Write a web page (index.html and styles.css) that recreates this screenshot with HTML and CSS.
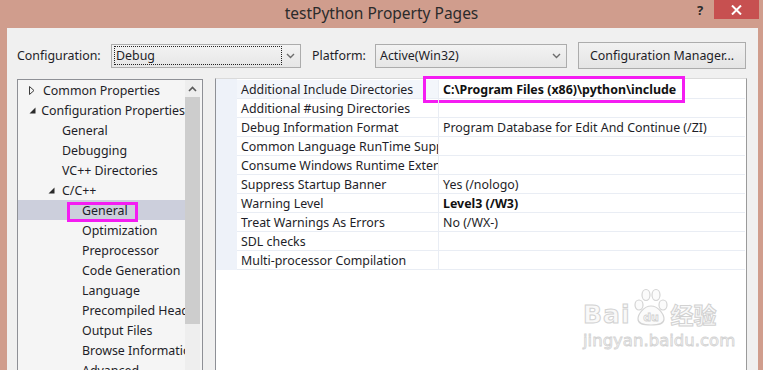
FILE: index.html
```html
<!DOCTYPE html>
<html>
<head>
<meta charset="utf-8">
<title>testPython Property Pages</title>
<link rel="stylesheet" href="styles.css">
</head>
<body>
<div class="window">
  <div class="titlebar">
    <span class="title">testPython Property Pages</span>
    <span class="help">?</span>
    <span class="close"><svg width="11" height="10" viewBox="0 0 11 10"><path d="M1 0.5 L10 9.5 M10 0.5 L1 9.5" stroke="#fff" stroke-width="2"/></svg></span>
  </div>
  <div class="client">
    <div class="toolbar">
      <span class="lbl lbl-config">Configuration:</span>
      <div class="combo combo-config">
        <span class="focus">Debug</span>
        <svg class="chev" width="9" height="6" viewBox="0 0 9 6"><path d="M1 1 L4.5 4.5 L8 1" fill="none" stroke="#6d6d6d" stroke-width="1.4"/></svg>
      </div>
      <span class="lbl lbl-platform">Platform:</span>
      <div class="combo combo-platform">
        <span class="val">Active(Win32)</span>
        <svg class="chev" width="9" height="6" viewBox="0 0 9 6"><path d="M1 1 L4.5 4.5 L8 1" fill="none" stroke="#6d6d6d" stroke-width="1.4"/></svg>
      </div>
      <button class="btn">Configuration Manager...</button>
    </div>
    <div class="panes">
      <div class="tree">
        <ul class="tree-list">
          <li class="l1"><span class="tri"><svg width="6" height="9" viewBox="0 0 6 9"><path d="M0.5 0.5 L5 4.5 L0.5 8.5 Z" fill="none" stroke="#3c3c3c" stroke-width="1"/></svg></span>Common Properties</li>
          <li class="l1"><span class="tri"><svg width="7" height="7" viewBox="0 0 7 7"><path d="M6.5 0.5 L6.5 6.5 L0.5 6.5 Z" fill="#2a2a2a"/></svg></span>Configuration Properties</li>
          <li class="l2">General</li>
          <li class="l2">Debugging</li>
          <li class="l2">VC++ Directories</li>
          <li class="l2b"><span class="tri"><svg width="7" height="7" viewBox="0 0 7 7"><path d="M6.5 0.5 L6.5 6.5 L0.5 6.5 Z" fill="#2a2a2a"/></svg></span>C/C++</li>
          <li class="l3 selected">General<span class="mark mark-tree"></span></li>
          <li class="l3">Optimization</li>
          <li class="l3">Preprocessor</li>
          <li class="l3">Code Generation</li>
          <li class="l3">Language</li>
          <li class="l3">Precompiled Headers</li>
          <li class="l3">Output Files</li>
          <li class="l3">Browse Information</li>
          <li class="l3">Advanced</li>
        </ul>
        <div class="scrollbar">
          <div class="sb-up"><svg width="9" height="6" viewBox="0 0 9 6"><path d="M1 5 L4.5 1.5 L8 5" fill="none" stroke="#5a5a5a" stroke-width="1.6"/></svg></div>
          <div class="sb-thumb"></div>
        </div>
      </div>
      <div class="grid">
        <div class="row current"><span class="gut"></span><span class="name">Additional Include Directories</span><span class="value bold">C:\Program Files (x86)\python\include</span><span class="mark mark-grid"></span></div>
        <div class="row"><span class="gut"></span><span class="name">Additional #using Directories</span><span class="value"></span></div>
        <div class="row"><span class="gut"></span><span class="name">Debug Information Format</span><span class="value">Program Database for Edit And Continue (/ZI)</span></div>
        <div class="row"><span class="gut"></span><span class="name">Common Language RunTime Support</span><span class="value"></span></div>
        <div class="row"><span class="gut"></span><span class="name">Consume Windows Runtime Extension</span><span class="value"></span></div>
        <div class="row"><span class="gut"></span><span class="name">Suppress Startup Banner</span><span class="value">Yes (/nologo)</span></div>
        <div class="row"><span class="gut"></span><span class="name">Warning Level</span><span class="value bold">Level3 (/W3)</span></div>
        <div class="row"><span class="gut"></span><span class="name">Treat Warnings As Errors</span><span class="value">No (/WX-)</span></div>
        <div class="row"><span class="gut"></span><span class="name">SDL checks</span><span class="value"></span></div>
        <div class="row"><span class="gut"></span><span class="name">Multi-processor Compilation</span><span class="value"></span></div>
      </div>
    </div>
  </div>
  <div class="watermark">
    <div class="wm-top">
      <span class="wm-bai">Bai</span>
      <svg class="wm-paw" width="40" height="40" viewBox="0 0 40 40">
        <g fill="#fbfbfb" stroke="#d4d4d4" stroke-width="1.2">
          <ellipse cx="8" cy="18" rx="4" ry="5"/>
          <ellipse cx="15" cy="8" rx="4" ry="5.5"/>
          <ellipse cx="25" cy="8" rx="4" ry="5.5"/>
          <ellipse cx="32" cy="18" rx="4" ry="5"/>
          <path d="M20 19 C13 19 7 27 7 32 C7 37 12 38 20 38 C28 38 33 37 33 32 C33 27 27 19 20 19 Z"/>
        </g>
        <text x="20" y="34" text-anchor="middle" class="wm-du">du</text>
      </svg>
      <span class="wm-cn">经验</span>
    </div>
    <div class="wm-url">jingyan.baidu.com</div>
  </div>
</div>
</body>
</html>
```
FILE: styles.css
```css
html, body {
  margin: 0;
  padding: 0;
}
body {
  width: 763px;
  height: 370px;
  overflow: hidden;
  font-family: "Noto Sans", "Noto Sans CJK SC", sans-serif;
  font-size: 12.4px;
  color: #1e1e28;
  background: #d09d8d;
}
.window {
  position: relative;
  height: 370px;
  display: flex;
  flex-direction: column;
}
.titlebar {
  position: relative;
  height: 28px;
  flex: none;
}
.title {
  display: block;
  text-align: center;
  line-height: 26px;
  font-size: 15.5px;
  color: #2b2b2b;
}
.help {
  position: absolute;
  left: 697px;
  top: 1px;
  font-weight: bold;
  font-size: 13px;
  color: #2b2b2b;
}
.close {
  position: absolute;
  left: 714px;
  top: 0;
  width: 45px;
  height: 19px;
  background: #c75050;
  display: flex;
  align-items: center;
  justify-content: center;
}
.client {
  flex: 1;
  margin: 0 5px 0 7px;
  background: #f0f0f0;
  padding: 14px 0 0 10px;
  display: flex;
  flex-direction: column;
  gap: 9px;
  min-height: 0;
}
.toolbar {
  display: flex;
  align-items: center;
  height: 27px;
  flex: none;
}
.lbl-config {
  width: 94px;
}
.lbl-platform {
  margin-left: 11px;
  width: 63px;
}
.combo {
  box-sizing: border-box;
  height: 24px;
  border: 1px solid #acacac;
  background: linear-gradient(#f3f3f3, #e6e6e6);
  display: flex;
  align-items: center;
}
.combo-config {
  width: 190px;
}
.combo-platform {
  width: 192px;
}
.focus {
  box-sizing: border-box;
  margin-left: 2px;
  width: 168px;
  height: 19px;
  line-height: 17px;
  padding-left: 1px;
  border: 1px dotted #222;
}
.combo-platform .val {
  padding-left: 4px;
}
.chev {
  margin-left: auto;
  margin-right: 5px;
}
.btn {
  margin-left: 11px;
  box-sizing: border-box;
  width: 168px;
  height: 27px;
  border: 1px solid #acacac;
  background: linear-gradient(#f1f1f1, #e5e5e5);
  font: inherit;
  color: inherit;
  padding: 0;
}
.panes {
  flex: none;
  display: flex;
  align-items: flex-start;
  gap: 12px;
  height: 320px;
}
.tree {
  box-sizing: border-box;
  margin-top: 1px;
  width: 186px;
  height: 320px;
  border: 1px solid #8e9096;
  background: #f5f5f5;
  display: flex;
  padding-right: 2px;
}
.tree-list {
  list-style: none;
  margin: 0;
  padding: 0;
  width: 167px;
  overflow: hidden;
}
.tree-list li {
  position: relative;
  height: 20px;
  line-height: 20px;
  padding-top: 1px;
  box-sizing: border-box;
  white-space: nowrap;
  display: flex;
  align-items: center;
}
.tri {
  display: inline-flex;
  align-items: center;
  width: 14px;
}
.l1 {
  padding-left: 11px;
}
.l2 {
  padding-left: 44px;
}
.l2b {
  padding-left: 30px;
}
.l3 {
  padding-left: 64px;
}
.selected {
  background: #cccfdc;
}
.mark {
  position: absolute;
  box-sizing: border-box;
  border: 3px solid #f41cf2;
}
.mark-tree {
  left: 49px;
  top: 2px;
  width: 71px;
  height: 20px;
}
.scrollbar {
  width: 15px;
  background: #eeeeee;
  display: flex;
  flex-direction: column;
}
.sb-up {
  height: 17px;
  display: flex;
  align-items: center;
  justify-content: center;
}
.sb-thumb {
  height: 227px;
  background: #cdcdcd;
}
.grid {
  box-sizing: border-box;
  width: 532px;
  height: 320px;
  background: #fff;
  border-left: 1px solid #8e9096;
  border-right: 1px solid #9a9a9a;
  border-top: 1px solid #dadada;
  padding-top: 1px;
}
.row {
  position: relative;
  display: grid;
  grid-template-columns: 21px 201px 1fr;
  height: 19px;
}
.gut {
  background: #eef2f9;
}
.current .gut {
  margin-top: -1px;
}
.name, .value {
  box-sizing: border-box;
  border-bottom: 1px solid #e9edf4;
  line-height: 18px;
  padding-top: 1px;
  white-space: nowrap;
  overflow: hidden;
}
.name {
  padding-left: 4px;
}
.value {
  border-left: 1px solid #e9edf4;
  padding-left: 4px;
  margin-right: 1px;
}
.current .name {
  background: #f3f6fb;
}
.bold {
  font-weight: bold;
  color: #111;
}
.mark-grid {
  left: 207px;
  top: -4px;
  width: 262px;
  height: 27px;
}
.watermark {
  position: absolute;
  left: 583px;
  top: 287px;
  display: flex;
  flex-direction: column;
  align-items: flex-start;
}
.wm-top {
  display: flex;
  align-items: flex-end;
  height: 40px;
}
.wm-bai, .wm-cn {
  font-family: "DejaVu Sans", sans-serif;
  font-weight: bold;
  font-size: 25px;
  line-height: 24px;
  letter-spacing: 1px;
  color: #f9f9f9;
  -webkit-text-stroke: 1px #d2d2d2;
}
.wm-cn {
  font-family: "Noto Sans CJK SC", sans-serif;
  font-size: 23px;
  line-height: 25px;
  letter-spacing: 0;
  margin-left: 0;
}
.wm-paw {
  margin: 0;
}
.wm-du {
  font-family: "DejaVu Sans", sans-serif;
  font-size: 11px;
  font-weight: bold;
  fill: #fbfbfb;
  stroke: #d0d0d0;
  stroke-width: 0.8;
}
.wm-url {
  margin-top: 5px;
  font-family: "DejaVu Sans", sans-serif;
  font-size: 16.5px;
  line-height: 17px;
  color: #f9f9f9;
  -webkit-text-stroke: 0.8px #d2d2d2;
}
```
